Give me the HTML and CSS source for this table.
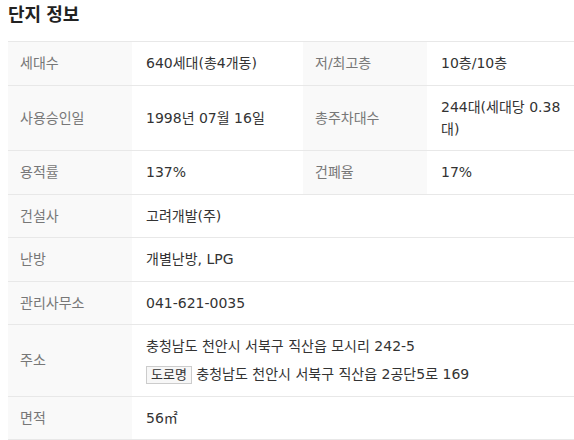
FILE: index.html
```html
<!DOCTYPE html>
<html lang="ko">
<head>
<meta charset="utf-8">
<link rel="stylesheet" href="styles.css">
</head>
<body>
<h2 class="title">단지 정보</h2>
<table class="info">
  <colgroup>
    <col class="c-label1"><col class="c-value1"><col class="c-label2"><col class="c-value2">
  </colgroup>
  <tr>
    <th>세대수</th><td>640세대(총4개동)</td>
    <th>저/최고층</th><td>10층/10층</td>
  </tr>
  <tr>
    <th>사용승인일</th><td>1998년 07월 16일</td>
    <th>총주차대수</th><td>244대(세대당 0.38대)</td>
  </tr>
  <tr>
    <th>용적률</th><td>137%</td>
    <th>건폐율</th><td>17%</td>
  </tr>
  <tr>
    <th>건설사</th><td colspan="3">고려개발(주)</td>
  </tr>
  <tr>
    <th>난방</th><td colspan="3">개별난방, LPG</td>
  </tr>
  <tr>
    <th>관리사무소</th><td colspan="3">041-621-0035</td>
  </tr>
  <tr>
    <th>주소</th>
    <td colspan="3">
      <div class="addr">충청남도 천안시 서북구 직산읍 모시리 242-5</div>
      <div class="addr road"><span class="badge">도로명</span> 충청남도 천안시 서북구 직산읍 2공단5로 169</div>
    </td>
  </tr>
  <tr>
    <th>면적</th><td colspan="3">56㎡</td>
  </tr>
</table>
</body>
</html>
```

FILE: styles.css
```css
html, body {
  background: #fff;
}
body {
  margin: 0 0 0 8px;
  font-family: "DejaVu Sans", "Noto Sans CJK KR", sans-serif;
  color: #333;
  overflow: hidden;
}
.title {
  margin: 0 0 14px;
  font-family: "Noto Sans CJK KR", sans-serif;
  font-size: 18px;
  line-height: 27px;
  font-weight: bold;
  color: #222;
}
.info {
  width: 566px;
  border-collapse: collapse;
  table-layout: fixed;
  font-size: 14px;
}
.c-label1 { width: 124px; }
.c-value1 { width: 171px; }
.c-label2 { width: 124px; }
.c-value2 { width: 147px; }
.info th,
.info td {
  border-top: 1px solid #e8e8e8;
  border-bottom: 1px solid #e8e8e8;
  line-height: 22px;
  padding: 10px 6px 10.5px 14px;
  text-align: left;
  vertical-align: middle;
}
.info th {
  background: #f9f9f9;
  font-weight: normal;
  color: #777;
  padding-left: 12px;
}
.info td {
  color: #333;
}
.addr.road {
  margin-top: 6px;
}
.badge {
  display: inline-block;
  border: 1px solid #ccc;
  background: #f7f7f7;
  padding: 0 4px;
  line-height: 16px;
  font-size: 13px;
  color: #333;
}
```
